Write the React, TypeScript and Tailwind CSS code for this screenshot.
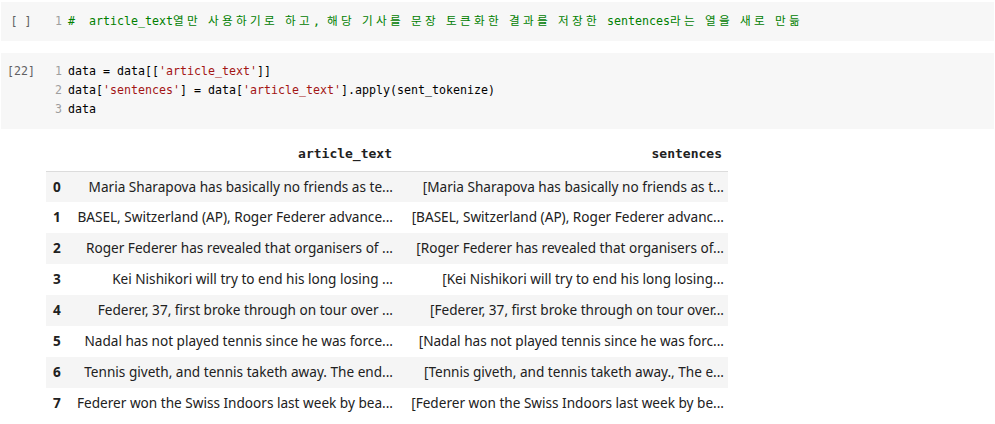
import React from "react";

const mono = "font-['DejaVu_Sans_Mono','Noto_Sans_CJK_KR',monospace]";
const ko = "font-['Noto_Sans_CJK_KR',sans-serif] tracking-[3.3px]";

const rows: [string, string][] = [
  ["Maria Sharapova has basically no friends as te...", "[Maria Sharapova has basically no friends as t..."],
  ["BASEL, Switzerland (AP), Roger Federer advance...", "[BASEL, Switzerland (AP), Roger Federer advanc..."],
  ["Roger Federer has revealed that organisers of ...", "[Roger Federer has revealed that organisers of..."],
  ["Kei Nishikori will try to end his long losing ...", "[Kei Nishikori will try to end his long losing..."],
  ["Federer, 37, first broke through on tour over ...", "[Federer, 37, first broke through on tour over..."],
  ["Nadal has not played tennis since he was force...", "[Nadal has not played tennis since he was forc..."],
  ["Tennis giveth, and tennis taketh away. The end...", "[Tennis giveth, and tennis taketh away., The e..."],
  ["Federer won the Swiss Indoors last week by bea...", "[Federer won the Swiss Indoors last week by be..."],
];

function K({ children }: { children: React.ReactNode }) {
  return <span className={ko}>{children}</span>;
}

export default function App() {
  return (
    <div className="w-[995px] h-[424px] bg-white overflow-hidden pt-[2px]">
      {/* Cell 1 */}
      <div className="flex items-center h-[39px] bg-[#f7f7f7] mx-[1px]">
        <div className={`w-[40px] text-center text-[#616161] text-[11.6px] ${mono}`}>[ ]</div>
        <div className={`w-[21px] text-right text-[#9e9e9e] text-[11.6px] ${mono}`}>1</div>
        <div className={`ml-[6px] text-[11.63px] whitespace-pre text-[#008000] ${mono}`}>
          {"#  article_text"}<K>열만</K>{" "}<K>사용하기로</K>{" "}<K>하고</K>{", "}<K>해당</K>{" "}<K>기사를</K>{" "}<K>문장</K>{" "}<K>토큰화한</K>{" "}<K>결과를</K>{" "}<K>저장한</K>{" sentences"}<K>라는</K>{" "}<K>열을</K>{" "}<K>새로</K>{" "}<K>만듦</K>
        </div>
      </div>

      {/* Cell 2 */}
      <div className="flex mt-[12px] h-[76px] bg-[#f7f7f7] mx-[1px] py-[9px] leading-[19px]">
        <div className={`w-[40px] text-center text-[#616161] text-[11.6px] ${mono}`}>[22]</div>
        <div className={`w-[21px] flex flex-col items-end text-[#9e9e9e] text-[11.6px] ${mono}`}>
          <span>1</span>
          <span>2</span>
          <span>3</span>
        </div>
        <div className={`ml-[6px] flex flex-col text-[11.63px] whitespace-pre text-black ${mono}`}>
          <span>
            {"data = data[["}<span className="text-[#a31515]">'article_text'</span>{"]]"}
          </span>
          <span>
            {"data["}<span className="text-[#a31515]">'sentences'</span>{"] = data["}<span className="text-[#a31515]">'article_text'</span>{"].apply(sent_tokenize)"}
          </span>
          <span>data</span>
        </div>
      </div>

      {/* Output table */}
      <div className="ml-[46px] mt-[10px]">
        <table className="table-fixed w-[682px] border-collapse font-['Noto_Sans',sans-serif] text-[13.6px] text-[#212121]">
          <thead>
            <tr className="h-[32px] border-b border-[#dcdcdc]">
              <th className="w-[26px]"></th>
              <th className={`w-[328px] text-right pr-[8px] pb-[2px] font-bold text-[13px] text-[#212121] ${mono}`}>article_text</th>
              <th className={`w-[328px] text-right pr-[6px] pb-[2px] font-bold text-[13px] text-[#212121] ${mono}`}>sentences</th>
            </tr>
          </thead>
          <tbody>
            {rows.map((r, i) => (
              <tr key={i} className={`h-[31px] ${i % 2 === 0 ? "bg-[#f5f5f5]" : "bg-white"}`}>
                <th className="text-left pl-[7px] font-bold">{i}</th>
                <td className="text-right pr-[7px] whitespace-nowrap">{r[0]}</td>
                <td className="text-right pr-[4px] whitespace-nowrap">{r[1]}</td>
              </tr>
            ))}
          </tbody>
        </table>
      </div>
    </div>
  );
}
